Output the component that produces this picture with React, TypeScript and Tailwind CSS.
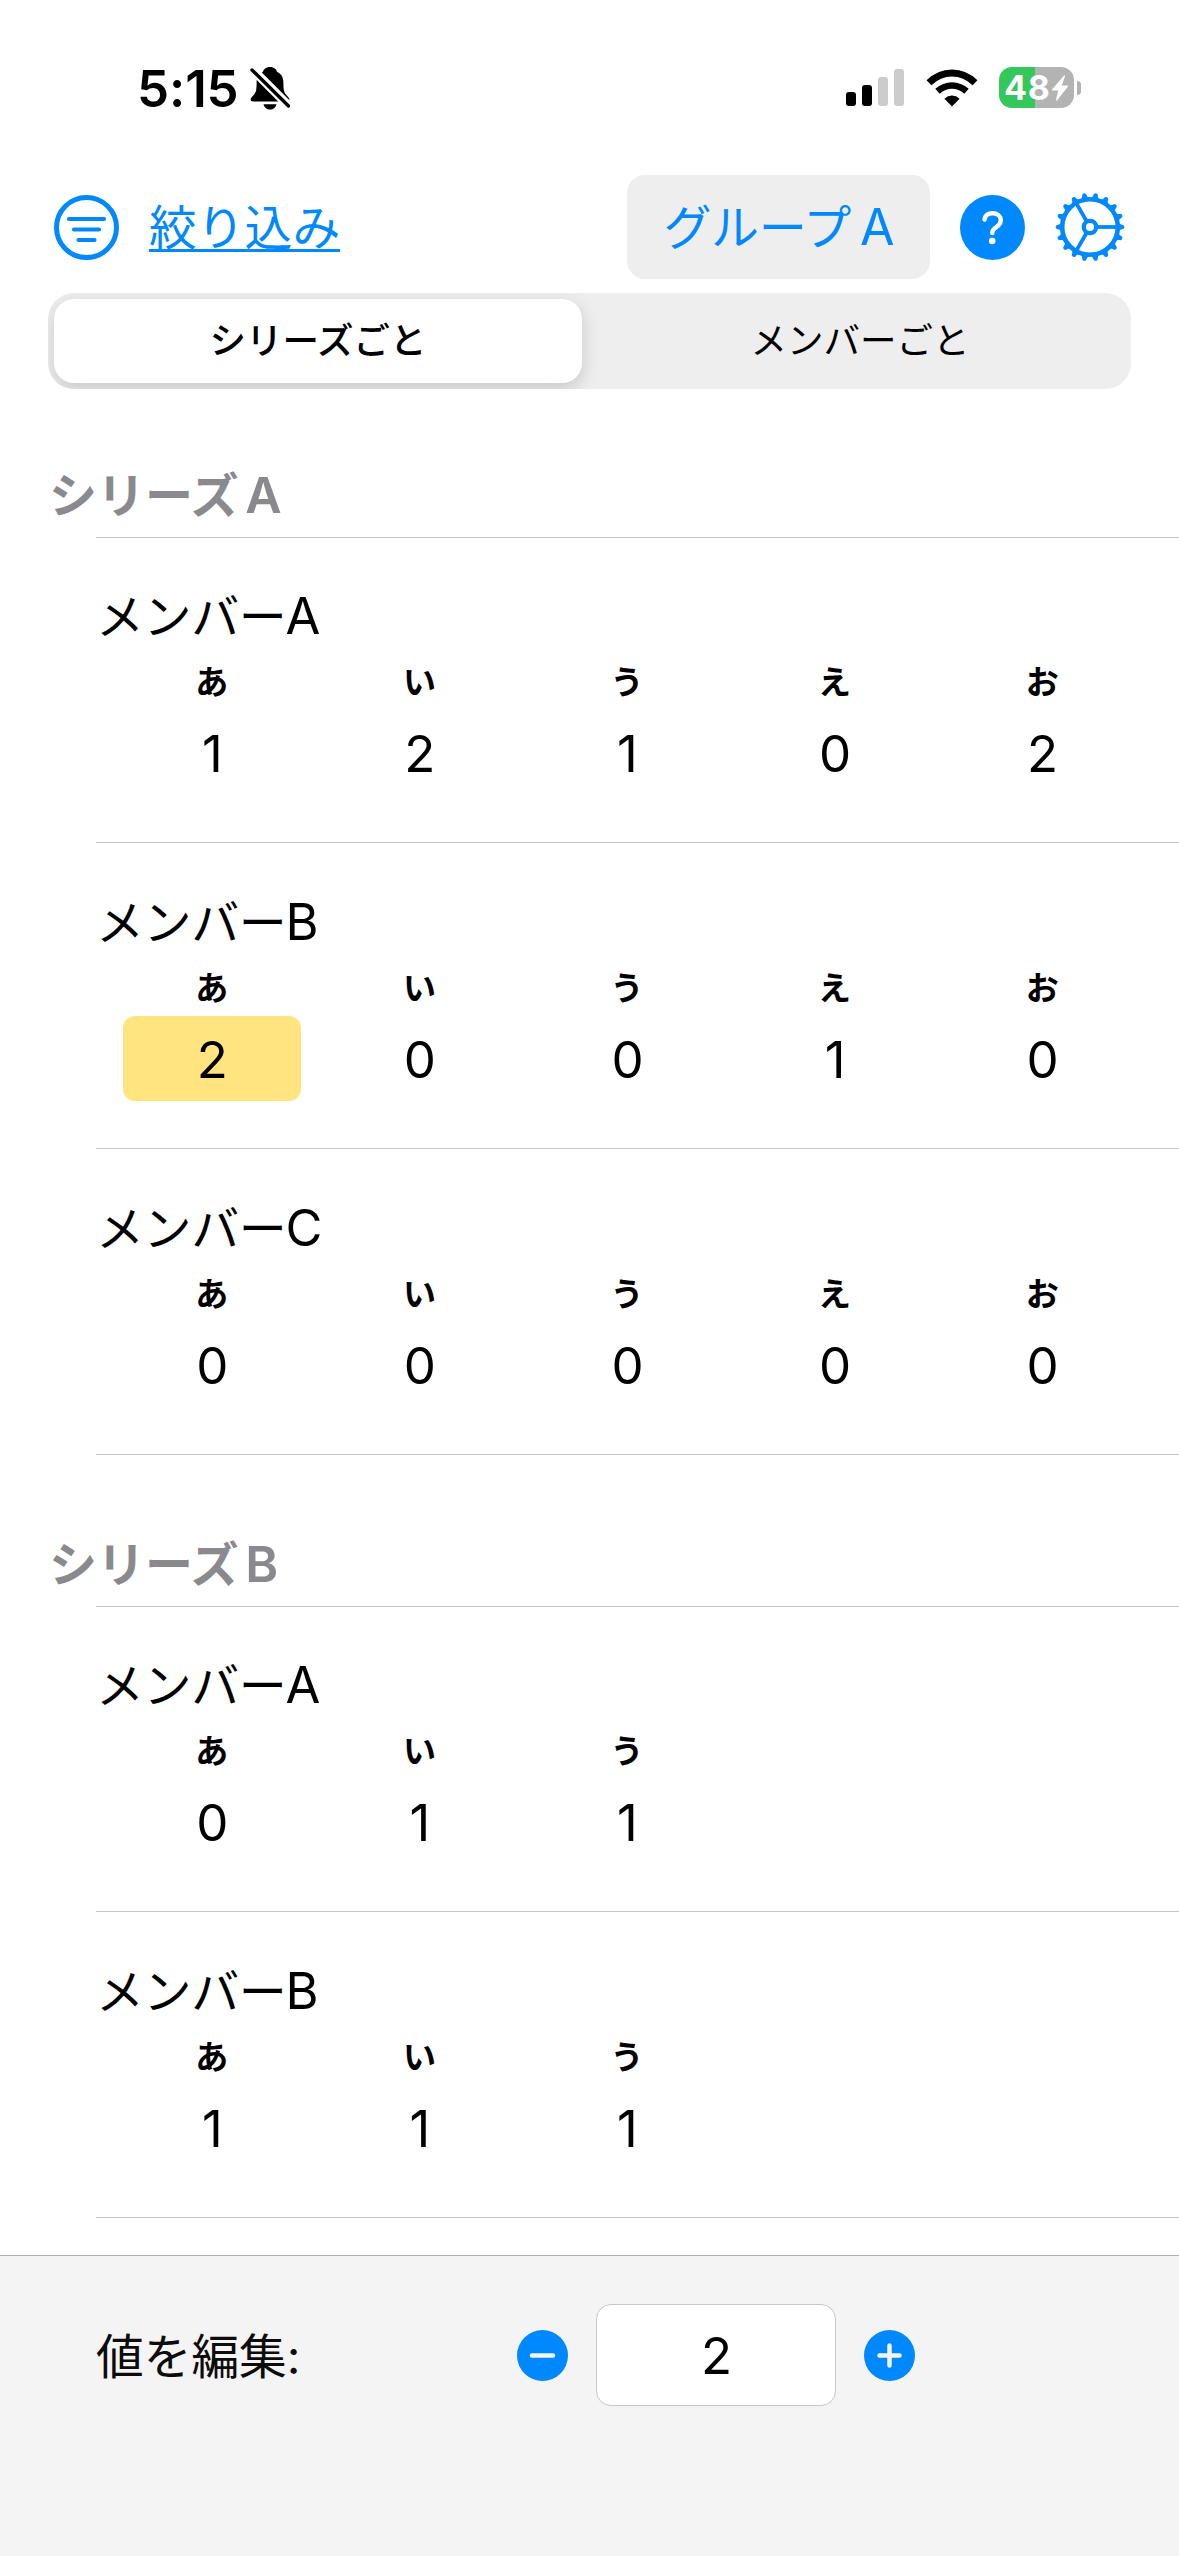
import React from "react";

type Member = { name: string; labels: string[]; values: number[]; selected?: number };
type Series = { title: string; letter: string; members: Member[] };

const five = ["あ", "い", "う", "え", "お"];
const three = ["あ", "い", "う"];

const series: Series[] = [
  {
    title: "シリーズ",
    letter: "A",
    members: [
      { name: "A", labels: five, values: [1, 2, 1, 0, 2] },
      { name: "B", labels: five, values: [2, 0, 0, 1, 0], selected: 0 },
      { name: "C", labels: five, values: [0, 0, 0, 0, 0] },
    ],
  },
  {
    title: "シリーズ",
    letter: "B",
    members: [
      { name: "A", labels: three, values: [0, 1, 1] },
      { name: "B", labels: three, values: [1, 1, 1] },
    ],
  },
];

function BellSlash() {
  return (
    <svg className="ml-[11px] h-[44px] w-[40px]" viewBox="0 0 40 44">
      <path
        d="M20 1c-4.200 0-6.500 2.500-7 4.800C8.500 8 6.600 11.500 6.600 17c0 8-.8 9.800-3.800 13C1 32 .6 32.800.6 33.500c0 1.300 1 2 2.400 2h34c1.400 0 2.400-.7 2.400-2 0-.7-.4-1.500-2.200-3.500-3-3.200-3.800-5-3.800-13 0-5.500-1.900-9-6.400-11.200C26.500 3.500 24.200 1 20 1Z"
        fill="#000"
      />
      <path d="M13.500 38.200h13c-.6 3-3.200 5.300-6.500 5.300s-5.900-2.300-6.500-5.300Z" fill="#000" />
      <path d="M-1 1.500 41 43.500" stroke="#fff" strokeWidth="9" transform="translate(0 -1.500)" />
      <path d="M2 4 38.500 40" stroke="#000" strokeWidth="3.400" strokeLinecap="round" />
    </svg>
  );
}

function Wifi() {
  return (
    <svg className="ml-[22px] h-[38px] w-[52px]" viewBox="0 0 52 38" fill="none" stroke="#000" strokeWidth="7">
      <path d="M3 13.800Q13 4 26 4t23 9.800" />
      <path d="M11.500 22.300Q18 16.500 26 16.500t14.500 5.800" strokeWidth="6.600" />
      <path d="M18.400 29.800Q21.800 26.500 26 26.500t7.600 3.300L26 37.500Z" fill="#000" stroke="none" />
    </svg>
  );
}

function Battery() {
  return (
    <div className="ml-[21px] flex items-center gap-[3px]">
      <div className="flex h-[41px] w-[75px] items-center rounded-[13px] bg-[linear-gradient(90deg,#34c759_36px,#b3b3b3_36px)] pl-[5px]">
        <span className="text-[34px] leading-none font-bold tracking-[0.8px] text-white">48</span>
        <svg className="h-[26px] w-[18px] shrink-0" viewBox="0 0 18 26">
          <path d="M13 .5 1 14.500q-.8 1 .5 1h5.800L5 25q0 1 1 .4L17 11.500q.6-1-.5-1h-5.700L14 1.200Q14 0 13 .5Z" fill="#fff" />
        </svg>
      </div>
      <div className="h-[14px] w-[4px] rounded-r-full bg-[#b3b3b3]" />
    </div>
  );
}

function StatusBar() {
  return (
    <div className="flex h-[175px] justify-between pr-[98px] pl-[137px]">
      <div className="mt-[66px] flex h-[44px] items-center">
        <span className="text-[51px] leading-none font-semibold tracking-[-0.1px]">5:15</span>
        <BellSlash />
      </div>
      <div className="mt-[66px] flex h-[43px] items-center">
        <div className="flex items-end gap-[6px]">
          <div className="h-[14px] w-[10px] rounded-[3px] bg-black" />
          <div className="h-[21px] w-[10px] rounded-[3px] bg-black" />
          <div className="h-[29px] w-[10px] rounded-[3px] bg-[#ccc]" />
          <div className="h-[37px] w-[10px] rounded-[3px] bg-[#ccc]" />
        </div>
        <Wifi />
        <Battery />
      </div>
    </div>
  );
}

function FilterIcon() {
  return (
    <svg className="h-[65px] w-[65px]" viewBox="0 0 65 65" fill="none" stroke="#0088ff" strokeLinecap="round">
      <circle cx="32.500" cy="32.500" r="30" strokeWidth="5" />
      <path d="M15 24h35M20 34.500h25M24.500 45h16" strokeWidth="4.200" />
    </svg>
  );
}

function HelpIcon() {
  return (
    <svg className="ml-[30px] h-[65px] w-[65px]" viewBox="0 0 65 65">
      <circle cx="32.500" cy="32.500" r="32.500" fill="#0088ff" />
      <path
        d="M24.500 24.500c.7-4 3.700-6.300 8-6.300 4.700 0 8.300 2.700 8.300 7.100 0 3.300-1.700 5-4.500 6.800-2.600 1.700-4 3-4 5.600v.3"
        fill="none"
        stroke="#fff"
        strokeWidth="4.400"
        strokeLinecap="round"
        strokeLinejoin="round"
      />
      <circle cx="32.200" cy="46" r="3.300" fill="#fff" />
    </svg>
  );
}

const teeth = Array.from({ length: 18 }, (_, i) => i * 20);

function GearIcon() {
  return (
    <svg className="ml-[30px] h-[70px] w-[70px]" viewBox="-35 -35 70 70" stroke="#0088ff" fill="none">
      <circle r="27.800" strokeWidth="4.600" />
      <circle r="6.200" strokeWidth="4.300" />
      {[0, 120, 240].map((a) => (
        <path key={a} d="M7 0H27" strokeWidth="3.800" transform={`rotate(${a})`} />
      ))}
      {teeth.map((a) => (
        <path
          key={a}
          d="M28.500-4.200Q30-2.500 33.500-1.800Q35.200 0 33.500 1.800Q30 2.500 28.500 4.200Z"
          fill="#0088ff"
          stroke="none"
          transform={`rotate(${a})`}
        />
      ))}
    </svg>
  );
}

function Toolbar() {
  return (
    <div className="flex h-[104px] items-center pr-[54px] pl-[54px] text-[#0088ff]">
      <FilterIcon />
      <div className="-mt-[4px] ml-[30px] h-[54px] border-b-[3px] border-[#0088ff] text-[47.8px] leading-[61px]">絞り込み</div>
      <div className="ml-auto flex items-center">
        <div className="flex h-[104px] w-[303px] items-center justify-center rounded-[18px] bg-[#eee]">
          <div className="text-[48px] leading-[62px] tracking-[-0.4px] [word-spacing:-4px]">
            グループ <span className="text-[50px] tracking-[-1px]">A</span>
          </div>
        </div>
        <HelpIcon />
        <GearIcon />
      </div>
    </div>
  );
}

function Segmented() {
  return (
    <div className="mx-[48px] mt-[14px] flex h-[96px] overflow-hidden rounded-[26px] bg-[#eee] p-[6px] text-[36.5px] leading-none">
      <div className="flex w-[528px] items-center justify-center rounded-[20px] bg-white font-medium shadow-[0_6px_18px_rgba(0,0,0,0.16)]">
        シリーズごと
      </div>
      <div className="flex flex-1 items-center justify-center pl-[13px]">メンバーごと</div>
    </div>
  );
}

function MemberRow({ member }: { member: Member }) {
  return (
    <div className="ml-[96px] h-[306px] border-b border-[#c6c6c8] pt-[48px]">
      <div className="h-[63px] text-[48px] leading-[62px] tracking-[-0.4px]">
        メンバー<span className="-ml-px text-[50.5px]">{member.name}</span>
      </div>
      <div className="ml-[12px] flex">
        {member.labels.map((label, i) => (
          <div key={label} className="flex w-[207.6px] flex-col items-center">
            <div className="mt-[12px] h-[44px] text-[33px] leading-[44px] font-bold">{label}</div>
            <div
              className={
                i === member.selected
                  ? "mt-[6px] flex h-[85px] w-[178px] items-center justify-center rounded-[12px] bg-[#ffe47f] pt-px pl-px text-[51px] leading-none"
                  : "mt-[6px] flex h-[85px] w-[178px] items-center justify-center pt-px pl-px text-[51px] leading-none"
              }
            >
              {member.values[i]}
            </div>
          </div>
        ))}
      </div>
    </div>
  );
}

function EditBar() {
  return (
    <div className="flex h-[301px] items-start border-t border-[#b0b0b0] bg-[#f4f4f4] pt-[48px] pl-[96px]">
      <div className="h-[102px] w-[421px] text-[47.7px] leading-[106px] text-[#0c0c0c]">値を編集:</div>
      <svg className="mt-[26px] h-[51px] w-[51px]" viewBox="0 0 51 51">
        <circle cx="25.500" cy="25.500" r="25.500" fill="#0088ff" />
        <path d="M15 25.500h21" stroke="#f4f4f4" strokeWidth="4.500" strokeLinecap="round" />
      </svg>
      <div className="ml-[28px] flex h-[102px] w-[240px] items-center justify-center rounded-[15px] border border-[#c8c8ca] bg-white pt-px pl-px text-[51px] leading-none">
        2
      </div>
      <svg className="mt-[26px] ml-[28px] h-[51px] w-[51px]" viewBox="0 0 51 51">
        <circle cx="25.500" cy="25.500" r="25.500" fill="#0088ff" />
        <path d="M15.500 25.500h20M25.500 15.500v20" stroke="#f4f4f4" strokeWidth="4.500" strokeLinecap="round" />
      </svg>
    </div>
  );
}

export default function App() {
  return (
    <div
      className={`flex h-[2556px] w-[1179px] flex-col overflow-hidden bg-white text-black font-["Inter","Noto_Sans_CJK_JP",sans-serif]`}
      lang="ja"
    >
      <StatusBar />
      <Toolbar />
      <Segmented />
      <div className="flex-1 overflow-hidden">
        {series.map((s, i) => (
          <section key={s.letter}>
            <div className={i === 0 ? "h-[148px] pt-[75px]" : "h-[151px] pt-[78px]"}>
              <h2 className="h-[63px] pl-[49px] text-[48px] leading-[62px] font-semibold [word-spacing:-5.5px] text-[#8a8a8e]">
                {s.title} <span className="text-[50px]">{s.letter}</span>
              </h2>
              <div className="ml-[96px] h-px translate-y-[10px] bg-[#c6c6c8]" />
            </div>
            {s.members.map((m) => (
              <MemberRow key={m.name} member={m} />
            ))}
          </section>
        ))}
      </div>
      <EditBar />
    </div>
  );
}
